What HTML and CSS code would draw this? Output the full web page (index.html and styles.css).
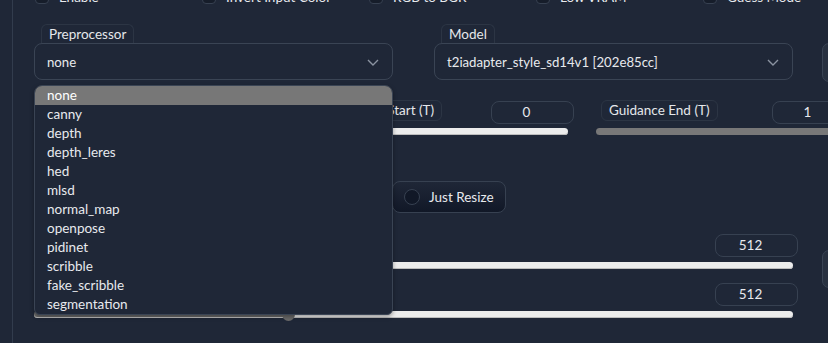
FILE: index.html
```html
<!DOCTYPE html>
<html lang="en">
<head>
  <meta charset="UTF-8">
  <title>ControlNet</title>
  <link rel="stylesheet" href="styles.css">
</head>
<body>

<div class="panel">
  <div class="checks">
    <label class="check"><span class="box"></span>Enable</label>
    <label class="check"><span class="box"></span>Invert Input Color</label>
    <label class="check"><span class="box"></span>RGB to BGR</label>
    <label class="check"><span class="box"></span>Low VRAM</label>
    <label class="check"><span class="box"></span>Guess Mode</label>
  </div>

  <div class="selects">
    <div class="field">
      <span class="label">Preprocessor</span>
      <div class="select">
        <span>none</span>
        <svg class="chevron" width="12" height="7" viewBox="0 0 12 7"><polyline points="1,1 6,6 11,1" fill="none" stroke="#8b93a1" stroke-width="1.4"/></svg>
      </div>
      <ul class="menu">
        <li class="active">none</li>
        <li>canny</li>
        <li>depth</li>
        <li>depth_leres</li>
        <li>hed</li>
        <li>mlsd</li>
        <li>normal_map</li>
        <li>openpose</li>
        <li>pidinet</li>
        <li>scribble</li>
        <li>fake_scribble</li>
        <li>segmentation</li>
      </ul>
    </div>
    <div class="field">
      <span class="label">Model</span>
      <div class="select">
        <span>t2iadapter_style_sd14v1 [202e85cc]</span>
        <svg class="chevron" width="12" height="7" viewBox="0 0 12 7"><polyline points="1,1 6,6 11,1" fill="none" stroke="#8b93a1" stroke-width="1.4"/></svg>
      </div>
    </div>
    <div class="side-btn"></div>
  </div>

  <div class="guidance">
    <div class="slider">
      <div class="slider-head">
        <span class="label">Weight</span>
        <span class="num">1</span>
      </div>
      <div class="track"></div>
    </div>
    <div class="slider">
      <div class="slider-head">
        <span class="label">Guidance Start (T)</span>
        <span class="num">0</span>
      </div>
      <div class="track"></div>
    </div>
    <div class="slider">
      <div class="slider-head">
        <span class="label">Guidance End (T)</span>
        <span class="num">1</span>
      </div>
      <div class="track gray"></div>
    </div>
  </div>

  <div class="resize">
    <label class="radio"><span class="dot"></span>Just Resize</label>
  </div>

  <div class="canvas">
    <div class="canvas-sliders">
      <div class="slider">
        <div class="slider-head">
          <span class="label">Canvas Width</span>
          <span class="num">512</span>
        </div>
        <div class="track short"></div>
      </div>
      <div class="slider">
        <div class="slider-head">
          <span class="label">Canvas Height</span>
          <span class="num">512</span>
        </div>
        <div class="track short filled">
          <span class="thumb" style="left: 33.5%"></span>
        </div>
      </div>
    </div>
    <div class="side-btn tall"></div>
  </div>
</div>

</body>
</html>
```

FILE: styles.css
```css
body {
  margin: 0;
  background-color: #1f2737;
  font-family: 'Lato', sans-serif;
  font-size: 13.5px;
  color: #e8eaee;
  overflow: hidden;
}

.panel {
  margin-left: 12px;
  border-left: 1px solid #323c4d;
  padding-left: 21px;
  width: 880px;
  height: 400px;
}

/* checkbox row, mostly scrolled off the top */
.checks {
  display: grid;
  grid-template-columns: repeat(5, 167px);
  margin-top: -10px;
  padding-left: 1px;
  height: 14px;
}

.check {
  display: flex;
  align-items: center;
  gap: 10px;
  line-height: 13px;
}

.box {
  width: 12px;
  height: 12px;
  border: 1px solid #374151;
  border-radius: 4px;
  background: #161d2a;
}

/* dropdowns */
.selects {
  display: flex;
  margin-top: 20px;
}

.field {
  position: relative;
  width: 359px;
  margin-right: 41px;
}

.label {
  display: inline-block;
  height: 18px;
  line-height: 18px;
  padding: 0 7px;
  margin-left: 7px;
  border: 1px solid #2c3544;
  border-bottom: none;
  border-radius: 6px 6px 0 0;
  font-size: 13.5px;
  color: #e5e7eb;
}

.select {
  display: flex;
  align-items: center;
  justify-content: space-between;
  height: 35px;
  padding: 0 13px 0 12px;
  border: 1px solid #3a4454;
  border-radius: 8px;
  font-size: 13.2px;
}

.chevron {
  margin-top: 1px;
}

.side-btn {
  width: 30px;
  height: 37px;
  margin-top: 19px;
  margin-left: -12px;
  background: #283140;
  border: 1px solid #3a4454;
  border-radius: 7px;
}

.side-btn.tall {
  height: 36px;
  margin-top: 17px;
  margin-left: 24px;
}

/* open preprocessor list */
.menu {
  position: absolute;
  top: 61px;
  left: 0;
  z-index: 10;
  width: 357px;
  margin: 0;
  padding: 0;
  list-style: none;
  background: #1f2737;
  border: 1px solid #3a4454;
  border-radius: 8px 8px 6px 6px;
  overflow: hidden;
  box-shadow: 0 2px 4px rgba(0, 0, 0, 0.35);
}

.menu li {
  height: 19px;
  line-height: 18px;
  padding-left: 12px;
}

.menu li.active {
  background: #777777;
  color: #fff;
}

/* sliders */
.guidance {
  display: grid;
  grid-template-columns: repeat(3, 259px);
  gap: 22px;
  margin-top: 18px;
}

.slider-head {
  display: flex;
  justify-content: space-between;
  align-items: flex-start;
  height: 24px;
}

.slider-head .label {
  margin-left: 5px;
  height: 19px;
  line-height: 19px;
  border-bottom: 1px solid #2c3544;
  border-radius: 6px;
}

.num {
  width: 69px;
  height: 21px;
  margin-top: 1px;
  padding-right: 12px;
  line-height: 21px;
  text-align: center;
  border: 1px solid #374151;
  border-radius: 8px;
}

.track {
  position: relative;
  height: 7px;
  margin-top: 4px;
  margin-right: 6px;
  background: #ececec;
  border-radius: 4px;
  box-shadow: inset 0 -1px 0 #bdbdbd;
}

.track.gray {
  background: #787878;
  box-shadow: none;
}

.track.short {
  margin-right: 5px;
}

.track.filled {
  background: linear-gradient(to right, #6a6a6a 0 34.3%, #ececec 34.3%);
}

.thumb {
  position: absolute;
  top: -3px;
  width: 13px;
  height: 13px;
  margin-left: -6px;
  border-radius: 50%;
  background: #6a6a6a;
}

/* resize mode */
.resize {
  margin-top: 46px;
  padding-left: 358px;
}

.radio {
  display: inline-flex;
  align-items: center;
  gap: 9px;
  height: 30px;
  padding: 0 11px 0 11px;
  border: 1px solid #374151;
  border-radius: 8px;
  background: linear-gradient(#1f2737, #111827);
}

.dot {
  width: 14px;
  height: 14px;
  border: 1px solid #374151;
  border-radius: 50%;
  background: #111827;
}

/* canvas size */
.canvas {
  display: flex;
  margin-top: 20px;
}

.canvas-sliders {
  width: 764px;
}

.canvas .slider + .slider {
  margin-top: 13px;
}

.canvas .slider-head {
  height: 23px;
}

.canvas .track {
  margin-top: 6px;
}
```
